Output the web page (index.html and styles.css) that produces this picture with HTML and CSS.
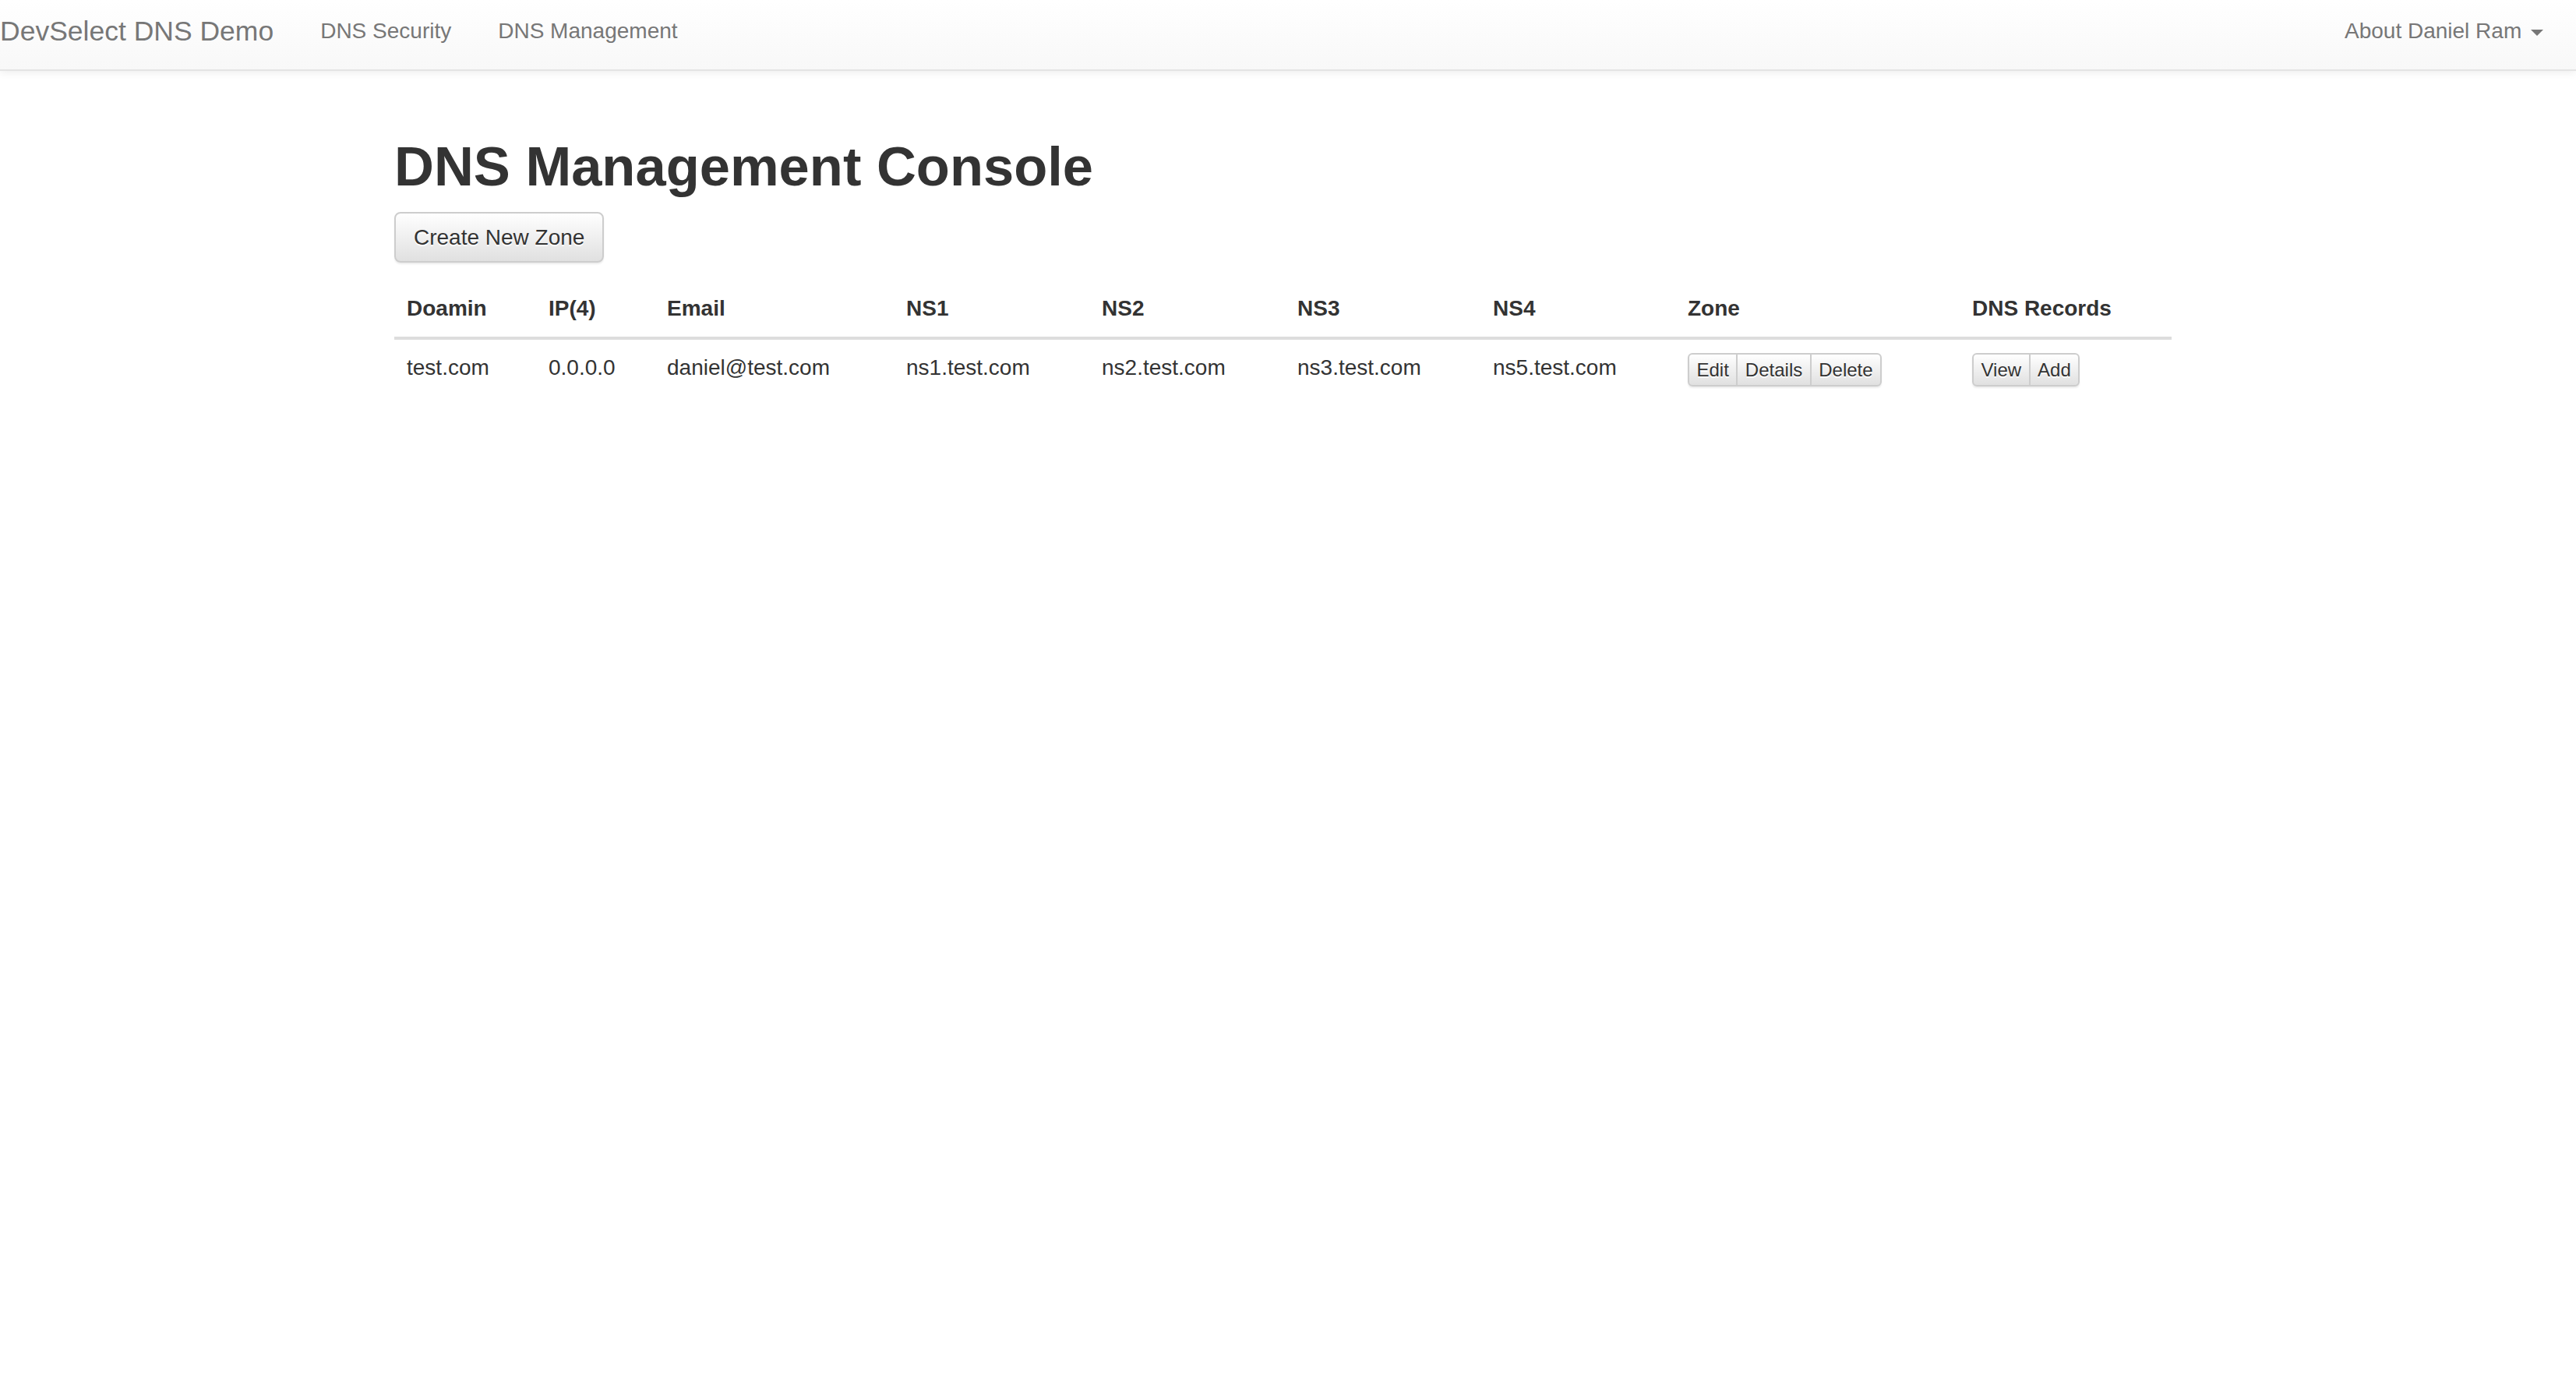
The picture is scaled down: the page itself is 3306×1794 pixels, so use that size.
FILE: index.html
```html
<!DOCTYPE html>
<html lang="en">
<head>
<meta charset="utf-8">
<title>DNS Management Console</title>
<link rel="stylesheet" href="styles.css">
</head>
<body>
<nav class="navbar">
  <a class="brand" href="#">DevSelect DNS Demo</a>
  <ul class="nav">
    <li><a href="#">DNS Security</a></li>
    <li><a href="#">DNS Management</a></li>
  </ul>
  <ul class="nav nav-right">
    <li><a href="#">About Daniel Ram <span class="caret"></span></a></li>
  </ul>
</nav>

<main class="container">
  <h1 class="title">DNS Management Console</h1>
  <button class="btn">Create New Zone</button>

  <table class="table">
    <colgroup>
      <col class="c-domain">
      <col class="c-ip">
      <col class="c-email">
      <col class="c-ns">
      <col class="c-ns">
      <col class="c-ns">
      <col class="c-ns4">
      <col class="c-zone">
      <col class="c-records">
    </colgroup>
    <thead>
      <tr>
        <th>Doamin</th>
        <th>IP(4)</th>
        <th>Email</th>
        <th>NS1</th>
        <th>NS2</th>
        <th>NS3</th>
        <th>NS4</th>
        <th>Zone</th>
        <th>DNS Records</th>
      </tr>
    </thead>
    <tbody>
      <tr>
        <td>test.com</td>
        <td>0.0.0.0</td>
        <td>daniel@test.com</td>
        <td>ns1.test.com</td>
        <td>ns2.test.com</td>
        <td>ns3.test.com</td>
        <td>ns5.test.com</td>
        <td>
          <div class="btn-group">
            <button class="btn-xs">Edit</button><button class="btn-xs">Details</button><button class="btn-xs">Delete</button>
          </div>
        </td>
        <td>
          <div class="btn-group">
            <button class="btn-xs">View</button><button class="btn-xs">Add</button>
          </div>
        </td>
      </tr>
    </tbody>
  </table>
</main>
</body>
</html>
```

FILE: styles.css
```css
html, body {
  margin: 0;
  padding: 0;
  background: #fff;
}

body {
  font-family: "Liberation Sans", Arial, Helvetica, sans-serif;
  font-size: 28px;
  line-height: 40px;
  color: #333;
}

/* ---------- navbar ---------- */
.navbar {
  display: flex;
  align-items: flex-start;
  height: 91px;
  box-sizing: border-box;
  padding: 20px 12px 0 0;
  background: linear-gradient(to bottom, #ffffff 0%, #f8f8f8 100%);
  border-bottom: 2px solid #e4e4e4;
  box-shadow: 0 2px 10px rgba(0, 0, 0, 0.075);
  position: relative;
  z-index: 2;
}

.brand {
  display: block;
  font-size: 35.5px;
  line-height: 40px;
  color: #777;
  text-decoration: none;
  padding-right: 30px;
  white-space: nowrap;
}

.nav {
  display: flex;
  list-style: none;
  margin: 0;
  padding: 0;
}

.nav a {
  display: block;
  padding: 0 30px;
  font-size: 28px;
  line-height: 40px;
  color: #777;
  text-decoration: none;
  white-space: nowrap;
}

.nav-right {
  margin-left: auto;
}

.caret {
  display: inline-block;
  width: 0;
  height: 0;
  margin-left: 4px;
  vertical-align: middle;
  border-top: 8px solid #777;
  border-left: 8px solid transparent;
  border-right: 8px solid transparent;
}

/* ---------- content ---------- */
.container {
  width: 2280px;
  margin-left: 506px;
}

.title {
  margin: 83px 0 18px;
  font-size: 70.5px;
  line-height: 80px;
  font-weight: bold;
  color: #333;
}

.btn {
  display: block;
  margin: 0;
  padding: 11px 23px 10px;
  font-family: inherit;
  font-size: 28px;
  line-height: 40px;
  color: #333;
  background: linear-gradient(to bottom, #ffffff 0%, #e0e0e0 100%);
  border: 2px solid #cdcdcd;
  border-radius: 8px;
  box-shadow: inset 0 2px 0 rgba(255, 255, 255, 0.15), 0 2px 2px rgba(0, 0, 0, 0.075);
  text-shadow: 0 2px 0 #fff;
  cursor: pointer;
}

/* ---------- table ---------- */
.table {
  width: 2280px;
  margin-top: 23px;
  border-collapse: collapse;
  border-spacing: 0;
  table-layout: fixed;
}

.c-domain  { width: 182px; }
.c-ip      { width: 152px; }
.c-email   { width: 307px; }
.c-ns      { width: 251px; }
.c-ns4     { width: 250px; }
.c-zone    { width: 365px; }
.c-records { width: 272px; }

.table th,
.table td {
  padding: 16px;
  text-align: left;
  vertical-align: top;
  line-height: 40px;
  white-space: nowrap;
}

.table th {
  font-weight: bold;
  border-bottom: 4px solid #ddd;
}

.btn-group {
  display: inline-flex;
  margin-top: 1px;
  vertical-align: top;
  border-radius: 6px;
  box-shadow: 0 2px 2px rgba(0, 0, 0, 0.075);
}

.btn-xs {
  margin: 0;
  padding: 2px 9.5px;
  font-family: inherit;
  font-size: 24px;
  line-height: 35px;
  color: #333;
  background: linear-gradient(to bottom, #ffffff 0%, #e0e0e0 100%);
  border: 2px solid #cdcdcd;
  border-radius: 0;
  text-shadow: 0 2px 0 #fff;
  cursor: pointer;
}

.btn-xs + .btn-xs {
  margin-left: -2px;
}

.btn-xs:first-child {
  border-top-left-radius: 6px;
  border-bottom-left-radius: 6px;
}

.btn-xs:last-child {
  border-top-right-radius: 6px;
  border-bottom-right-radius: 6px;
}
```
